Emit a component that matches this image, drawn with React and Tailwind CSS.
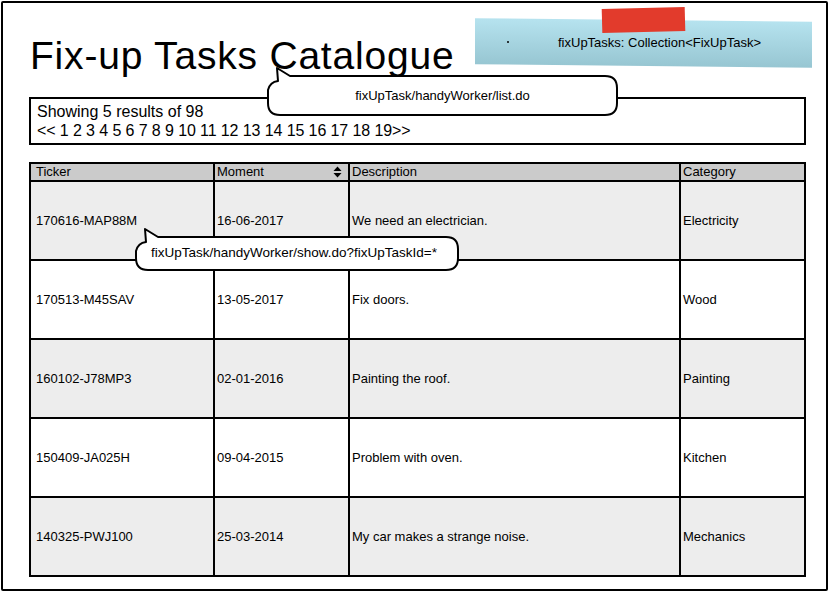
import React from 'react';

// Tabellendaten
const tasks = [
  { ticker: '170616-MAP88M', moment: '16-06-2017', description: 'We need an electrician.', category: 'Electricity' },
  { ticker: '170513-M45SAV', moment: '13-05-2017', description: 'Fix doors.', category: 'Wood' },
  { ticker: '160102-J78MP3', moment: '02-01-2016', description: 'Painting the roof.', category: 'Painting' },
  { ticker: '150409-JA025H', moment: '09-04-2015', description: 'Problem with oven.', category: 'Kitchen' },
  { ticker: '140325-PWJ100', moment: '25-03-2014', description: 'My car makes a strange noise.', category: 'Mechanics' },
];

const cols = 'grid grid-cols-[184px_135px_331px_123px]';

const SortIcon = () => (
  <svg width="9" height="12" viewBox="0 0 9 12" className="mr-[6px]">
    <path d="M0.5 5 L4.5 0.5 L8.5 5 Z" fill="#000" />
    <path d="M0.5 7 L4.5 11.5 L8.5 7 Z" fill="#000" />
  </svg>
);

// Sprechblase mit Schwanz nach oben links
const Callout = ({ x, y, w, h, tip, label, size }) => {
  const r = 12;
  const path = `M ${x + 22} ${y} L ${x + w - r} ${y} Q ${x + w} ${y} ${x + w} ${y + r} L ${x + w} ${y + h - r} Q ${x + w} ${y + h} ${x + w - r} ${y + h} L ${x + r} ${y + h} Q ${x} ${y + h} ${x} ${y + h - r} L ${x} ${y + 14} Q ${x + 2} ${y + 6} ${x + 10} ${y + 5} L ${tip[0]} ${tip[1]} L ${x + 22} ${y} Z`;
  return (
    <>
      <svg className="absolute left-0 top-0 pointer-events-none" width="830" height="593">
        <path d={path} fill="#fff" stroke="#000" strokeWidth="2" strokeLinejoin="round" />
      </svg>
      <div
        className={`absolute flex items-center justify-center text-black font-['Liberation_Sans',sans-serif] ${size}`}
        style={{ left: x, top: y, width: w, height: h }}
      >
        {label}
      </div>
    </>
  );
};

export default function App() {
  return (
    <div className="relative w-[830px] h-[593px] bg-white overflow-hidden font-['Liberation_Sans',Arial,sans-serif] text-black">
      <div className="absolute left-[1px] top-[1px] w-[827px] h-[590px] border-2 border-black rounded-[2px]" />

      <div className="relative pl-[29px] pt-[33px] pr-[22px]">
        <h1 className="text-[39px] leading-[46px] ml-[1px] tracking-[0.8px]">Fix-up Tasks Catalogue</h1>

        {/* Paginierung */}
        <div className="mt-[18px] w-[777px] h-[48px] border-2 border-black px-[6px] pt-[3px] text-[16px] leading-[19px]">
          <div>Showing 5 results of 98</div>
          <div className="tracking-[-0.1px]">&lt;&lt; 1 2 3 4 5 6 7 8 9 10 11 12 13 14 15 16 17 18 19&gt;&gt;</div>
        </div>

        {/* Tabelle */}
        <div className="mt-[17px] w-[777px] border-2 border-black text-[13px]">
          <div className={`${cols} h-[16px] bg-[#cbcbcb] leading-[16px]`}>
            <div className="pl-[5px] border-r-2 border-black">Ticker</div>
            <div className="pl-[2px] border-r-2 border-black flex items-center justify-between">
              <span>Moment</span>
              <SortIcon />
            </div>
            <div className="pl-[2px] border-r-2 border-black">Description</div>
            <div className="pl-[2px]">Category</div>
          </div>
          {tasks.map((t, i) => (
            <div
              key={t.ticker}
              className={`${cols} h-[79px] border-t-2 border-black ${i % 2 === 0 ? 'bg-[#ededed]' : 'bg-white'}`}
            >
              <div className="pl-[5px] border-r-2 border-black flex items-center">{t.ticker}</div>
              <div className="pl-[2px] border-r-2 border-black flex items-center">{t.moment}</div>
              <div className="pl-[2px] border-r-2 border-black flex items-center">{t.description}</div>
              <div className="pl-[2px] flex items-center">{t.category}</div>
            </div>
          ))}
        </div>
      </div>

      {/* Notizzettel */}
      <div className="absolute left-[475px] top-[20px] w-[337px] h-[46px] bg-gradient-to-b from-[#b6e3ef] to-[#97c6d2] [transform:skewY(0.6deg)]" />
      <div className="absolute left-[602px] top-[8px] w-[83px] h-[24px] bg-[#e23b2c] [transform:rotate(-1.5deg)]" />
      <div className="absolute left-[507px] top-[41px] w-[2px] h-[2px] bg-black rounded-full" />
      <div className="absolute left-[558px] top-[34px] text-[13px] leading-[18px]">fixUpTasks: Collection&lt;FixUpTask&gt;</div>

      <Callout x={268} y={76} w={349} h={39} tip={[277, 68]} label="fixUpTask/handyWorker/list.do" size="text-[13px]" />
      <Callout x={136} y={237} w={322} h={33} tip={[145, 229]} label="fixUpTask/handyWorker/show.do?fixUpTaskId=*" size="text-[13.5px] pr-[6px]" />
    </div>
  );
}
